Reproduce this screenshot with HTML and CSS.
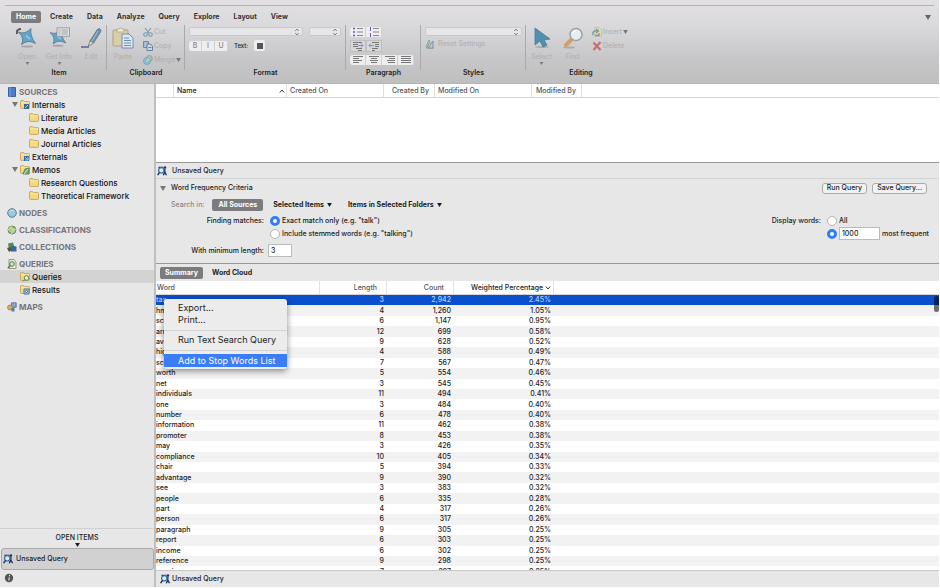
FILE: index.html
```html
<!DOCTYPE html>
<html lang="en">
<head>
<meta charset="utf-8">
<title>Unsaved Query</title>
<link rel="stylesheet" href="styles.css">
</head>
<body>
<svg class="defs" aria-hidden="true">
  <symbol id="folder" viewBox="0 0 10 9"><path d="M.5 2.2V1.4q0-.8.8-.8h2.4l.9 1h4.1q.8 0 .8.8v5.2q0 .8-.8.8H1.3q-.8 0-.8-.8z" fill="#f3d980" stroke="#bf9a50" stroke-width=".8"/><path d="M1 2.8h8" stroke="#fbecb0" stroke-width=".8"/></symbol>
  <symbol id="pin" viewBox="0 0 22 22"><ellipse cx="11" cy="19.500" rx="6" ry="1" fill="#a3a3a9"/><path d="M2.500 5Q9 8 15 1.500 13.500 8.500 19.500 16.500 12 12 5.500 17.500 9 11 2.500 5z" fill="#5fa6ca" stroke="#587994" stroke-width=".9" stroke-linejoin="round"/><path d="M10 8.500q2 2 4 3.500" stroke="#93cde4" stroke-width="1.500" fill="none"/></symbol>
  <symbol id="query" viewBox="0 0 10 10"><path d="M7.800 2.500V6L6.300 9.300M7.800 6l1.700 3.300M1.500 1.500h5" stroke="#292f68" stroke-width="1.400" fill="none"/><circle cx="8" cy="1.500" r="1.200" fill="#292f68"/><circle cx="4.300" cy="4.300" r="2.700" fill="#d8edf5" stroke="#33709c" stroke-width="1.200"/><path d="M2.500 6.300L.6 9.200" stroke="#292f68" stroke-width="1.500"/></symbol>
  <symbol id="tri" viewBox="0 0 6 5"><path d="M0 0h6L3 5z" fill="currentColor"/></symbol>
  <symbol id="updown" viewBox="0 0 6 8"><path d="M1.200 3L3 1l1.800 2M1.200 5L3 7l1.800-2" fill="none" stroke="#777" stroke-width=".9"/></symbol>
  <symbol id="globe" viewBox="0 0 10 10"><circle cx="5" cy="5" r="4.300" fill="#9fc6df" stroke="#587f99"/><path d="M2.500 4Q4 1.700 7 2.800" stroke="#d4e9f4" fill="none"/></symbol>
</svg>

<header class="ribbon">
  <nav class="menu">
    <button class="tab on">Home</button><button class="tab">Create</button><button class="tab">Data</button><button class="tab">Analyze</button><button class="tab">Query</button><button class="tab">Explore</button><button class="tab">Layout</button><button class="tab">View</button>
    <button class="collapse" aria-label="Collapse ribbon"><svg width="6" height="5"><use href="#tri"/></svg></button>
  </nav>
  <div class="groups">
    <section class="group item">
      <div class="tools">
        <button class="big"><svg width="22" height="22" viewBox="0 0 22 22"><use href="#pin" width="22" height="22"/><path d="M1 7q-1-5 4-5" stroke="#555" stroke-width="2" fill="none"/></svg><span>Open</span><svg class="drop" width="5" height="3"><use href="#tri"/></svg></button>
        <button class="big"><svg width="22" height="22" viewBox="0 0 22 22"><use href="#pin" width="20" height="22"/><path d="M9 .8h12.500v8.500H9z" fill="#e4e4e4" stroke="#8d8f94" stroke-width=".8"/><path d="M10.500 3h2m1 0h6.500M10.500 5h2m1 0h6.500M10.500 7h2m1 0h6.500" stroke="#8d8f94" stroke-width=".8"/></svg><span>Get Info</span><svg class="drop" width="5" height="3"><use href="#tri"/></svg></button>
        <button class="big"><svg width="22" height="22" viewBox="0 0 22 22"><path d="M1 20h8" stroke="#525b84" stroke-width="1.400"/><path d="M8.500 19l1.500-5 7-11q1.500-2 3-1 1.500 1 .5 3l-7 11z" fill="#6798ad" stroke="#596a7d" stroke-width=".8"/><path d="M8.500 19l1.500-5 3.500 2z" fill="#e9d9c4" stroke="#777" stroke-width=".5"/><path d="M12 14l6-10" stroke="#9bc3d2"/></svg><span>Edit</span></button>
      </div>
      <h2>Item</h2>
    </section>
    <section class="group clipboard">
      <div class="tools">
        <button class="big"><svg width="22" height="22" viewBox="0 0 22 22"><rect x="1" y="3" width="15" height="16" rx="1" fill="#d9ceab" stroke="#b2a27b"/><path d="M5 5V2h2q1-2 3 0h2v3z" fill="#eee8d5" stroke="#aaa17d" stroke-width=".7"/><path d="M10 7h7l4 4v10H10z" fill="#dce8f2" stroke="#6a86a6" stroke-width=".9"/><path d="M12 11h5M12 13.500h7M12 16h7M12 18.500h7" stroke="#6a8fb8"/></svg><span>Paste</span></button>
        <div class="stack">
          <button class="small"><svg width="10" height="10" viewBox="0 0 10 10"><path d="M2 1l4 5M8 1L4 6" stroke="#8c98a1" stroke-width="1.200"/><circle cx="2.500" cy="7.500" r="1.800" fill="none" stroke="#6f9fba" stroke-width="1.100"/><circle cx="7.500" cy="7.500" r="1.800" fill="none" stroke="#6f9fba" stroke-width="1.100"/></svg>Cut</button>
          <button class="small"><svg width="10" height="10" viewBox="0 0 10 10"><path d="M.5.5h5v6h-5z" fill="#a9bfd5" stroke="#6b8bad"/><path d="M4 3h3l2.500 2v4.500H4z" fill="#c9d9e8" stroke="#6181a6"/><path d="M5.500 6.500h3" stroke="#6181a6"/></svg>Copy</button>
          <button class="small"><svg width="10" height="10" viewBox="0 0 10 10"><circle cx="6.300" cy="3.500" r="3" fill="#acc3b3" stroke="#7b9b88" stroke-width=".7"/><circle cx="4" cy="6" r="3.500" fill="#8fbcd0" stroke="#6799b3" stroke-width=".7"/><path d="M3 7l3-3M4 4h2v2" stroke="#cfd89b" fill="none"/></svg>Merge<svg class="drop" width="5" height="4"><use href="#tri"/></svg></button>
        </div>
      </div>
      <h2>Clipboard</h2>
    </section>
    <section class="group format">
      <div class="tools col">
        <div class="line"><div class="picker font"><select aria-label="Font" disabled></select><svg width="6" height="8"><use href="#updown"/></svg></div><div class="picker size"><select aria-label="Size" disabled></select><svg width="6" height="8"><use href="#updown"/></svg></div></div>
        <div class="line"><div class="seg letters"><button>B</button><button>I</button><button>U</button></div><label class="textlabel" for="textcolor">Text:</label><button class="swatch" id="textcolor" aria-label="Text colour"><i></i></button></div>
      </div>
      <h2>Format</h2>
    </section>
    <section class="group paragraph">
      <div class="tools col">
        <div class="seg"><button aria-label="Bullets"><svg width="12" height="10" viewBox="0 0 12 10"><path d="M1 1.500h2M1 5h2M1 8.500h2" stroke="#6a54c8" stroke-width="1.500"/><path d="M5 1.500h6M5 5h6M5 8.500h6" stroke="#888"/></svg></button><button aria-label="Numbers"><svg width="12" height="10" viewBox="0 0 12 10"><path d="M2.500 0v4M2.500 6v4" stroke="#6a54c8"/><path d="M5 1.500h6M5 5h6M5 8.500h6" stroke="#888"/></svg></button></div>
        <div class="seg square"><button aria-label="Indent"><svg width="12" height="10" viewBox="0 0 12 10"><path d="M1 1.500h9M1 3.500h5M1 5.500h5M4 7.500h6M6 9.500h4" stroke="#777"/><path d="M6 4.500h5M9 2.500l2 2-2 2" stroke="#6e9bd0" fill="none"/></svg></button><button aria-label="Outdent"><svg width="12" height="10" viewBox="0 0 12 10"><path d="M4 1.500h7M7 3.500h4M7 5.500h4M4 7.500h6M4 9.500h3" stroke="#777"/><path d="M1 4.500h5M3 2.500l-2 2 2 2" stroke="#6e9bd0" fill="none"/></svg></button></div>
        <div class="seg"><button aria-label="Align left"><svg width="10" height="8" viewBox="0 0 10 8"><path d="M0 .5h10M0 2.500h6M0 4.500h9M0 6.500h6" stroke="#777"/></svg></button><button aria-label="Centre"><svg width="10" height="8" viewBox="0 0 10 8"><path d="M0 .5h10M2 2.500h6M1 4.500h8M2 6.500h6" stroke="#777"/></svg></button><button aria-label="Align right"><svg width="10" height="8" viewBox="0 0 10 8"><path d="M0 .5h10M4 2.500h6M2 4.500h8M3 6.500h7" stroke="#777"/></svg></button><button aria-label="Justify"><svg width="10" height="8" viewBox="0 0 10 8"><path d="M0 .5h10M0 2.500h10M0 4.500h10M0 6.500h10" stroke="#777"/></svg></button></div>
      </div>
      <h2>Paragraph</h2>
    </section>
    <section class="group styles">
      <div class="tools col">
        <div class="picker"><select aria-label="Style" disabled></select><svg width="6" height="8"><use href="#updown"/></svg></div>
        <button class="small reset"><svg width="10" height="10" viewBox="0 0 10 10"><path d="M1 8L4 1l1 1-3 7zM1 9h8" stroke="#8ba890" fill="#b4c8b4"/><path d="M3 9l5-7v7z" stroke="#7890ad" fill="#b9cad9"/></svg>Reset Settings</button>
      </div>
      <h2>Styles</h2>
    </section>
    <section class="group editing">
      <div class="tools">
        <button class="big"><svg width="22" height="22" viewBox="0 0 22 22"><ellipse cx="11" cy="20" rx="7" ry="1" fill="#acabb0"/><path d="M4 1l15 11-6 1 3 5-4 2-3-6-5 4z" fill="#528fae" stroke="#4d7995" stroke-width=".8"/></svg><span>Select</span><svg class="drop" width="5" height="3"><use href="#tri"/></svg></button>
        <button class="big"><svg width="22" height="22" viewBox="0 0 22 22"><ellipse cx="7" cy="20.500" rx="6" ry="1" fill="#acabb0"/><path d="M4 18l6-6" stroke="#d0a268" stroke-width="4" stroke-linecap="round"/><circle cx="14" cy="7.500" r="6" fill="#e7eef1" stroke="#9da1a8" stroke-width="1.500"/><path d="M10 7q1-3 4-3" stroke="#fff" fill="none"/></svg><span>Find</span></button>
        <div class="stack">
          <button class="small"><svg width="10" height="10" viewBox="0 0 10 10"><path d="M2.500.5H7L9.500 3v6h-7z" fill="#ecd9a9" stroke="#d5b885" stroke-width=".8"/><path d="M1 8Q0 3 6 4M4 2l2.500 2L4 6M3 8.500h4V6" stroke="#5f9dbc" stroke-width="1.300" fill="none"/></svg>Insert<svg class="drop" width="5" height="4"><use href="#tri"/></svg></button>
          <button class="small"><svg width="10" height="10" viewBox="0 0 10 10"><path d="M1.500 1.500l7 7.500M8.500 1L1.500 9" stroke="#d1676b" stroke-width="2"/></svg>Delete</button>
        </div>
      </div>
      <h2>Editing</h2>
    </section>
  </div>
</header>

<div class="body">
  <aside class="sidebar">
    <nav class="tree">
      <section><h3><svg width="10" height="10" viewBox="0 0 10 10"><path d="M1.500.5h7v9h-7z" fill="#4f7dcd" stroke="#3a5fa8"/><path d="M3 0v10" stroke="#7da0dd"/></svg>SOURCES</h3>
        <ul>
          <li><svg class="open" width="6" height="5"><use href="#tri"/></svg><svg width="10" height="10" viewBox="0 0 10 10"><use href="#folder" width="10" height="9"/><path d="M4 4h5v5H4z" fill="#3268a6"/><path d="M5 8l3-3" stroke="#c0da82"/></svg><a href="#">Internals</a></li>
          <li class="deep"><svg width="10" height="9"><use href="#folder"/></svg><a href="#">Literature</a></li>
          <li class="deep"><svg width="10" height="9"><use href="#folder"/></svg><a href="#">Media Articles</a></li>
          <li class="deep"><svg width="10" height="9"><use href="#folder"/></svg><a href="#">Journal Articles</a></li>
          <li><i class="open"></i><svg width="10" height="10" viewBox="0 0 10 10"><use href="#folder" width="10" height="9"/><path d="M4 4h5v5H4z" fill="#3268a6"/><path d="M5 5l3 3M8 5v3H5" stroke="#a8c5e5" fill="none"/></svg><a href="#">Externals</a></li>
          <li><svg class="open" width="6" height="5"><use href="#tri"/></svg><svg width="10" height="10" viewBox="0 0 10 10"><use href="#folder" width="10" height="9"/><path d="M3 9l2-5 4-1v6z" fill="#75a878" stroke="#43785a" stroke-width=".8"/><path d="M4 9l4-5" stroke="#d9e8c8"/></svg><a href="#">Memos</a></li>
          <li class="deep"><svg width="10" height="9"><use href="#folder"/></svg><a href="#">Research Questions</a></li>
          <li class="deep"><svg width="10" height="9"><use href="#folder"/></svg><a href="#">Theoretical Framework</a></li>
        </ul></section>
      <section><h3><svg width="10" height="10"><use href="#globe"/></svg>NODES</h3></section>
      <section><h3><svg width="10" height="10" viewBox="0 0 10 10"><circle cx="5" cy="5" r="4" fill="#a1cfa2" stroke="#599766"/><path d="M1 5l3-3 2 3 3-1M4 9l2-4" stroke="#edce64" stroke-width="1.300" fill="none"/><path d="M2 7l2 1M6 2l2 1" stroke="#4e95bd"/></svg>CLASSIFICATIONS</h3></section>
      <section><h3><svg width="10" height="10" viewBox="0 0 10 10"><path d="M1 1.500L6 .5l1.500 5L2 7z" fill="#548d56"/><path d="M4 3.500l5.500 1V9.500H4z" fill="#3567a3"/><path d="M0 6l3-1 2 3-3 2z" fill="#604c40"/></svg>COLLECTIONS</h3></section>
      <section><h3><svg width="10" height="10" viewBox="0 0 10 10"><path d="M2 .5h5L9 3v6.500H2z" fill="#efe9cd" stroke="#858560" stroke-width=".8"/><circle cx="5" cy="5" r="2.300" fill="#d2e4d8" stroke="#527b5b"/><path d="M3.500 6.500L.8 9.300" stroke="#527b5b" stroke-width="1.300"/></svg>QUERIES</h3>
        <ul>
          <li class="selected"><i class="open"></i><svg width="10" height="10" viewBox="0 0 10 10"><use href="#folder" width="10" height="9"/><circle cx="6.500" cy="6" r="2.300" fill="#e2f0df" stroke="#528055" stroke-width=".9"/><path d="M5 7.500L3 9.500" stroke="#528055"/></svg><a href="#">Queries</a></li>
          <li><i class="open"></i><svg width="10" height="10" viewBox="0 0 10 10"><use href="#folder" width="10" height="9"/><path d="M4 4h5v5H4z" fill="#bdd8ea" stroke="#416e9c"/><circle cx="6.500" cy="6.500" r="1" fill="#fff" stroke="#305c87"/></svg><a href="#">Results</a></li>
        </ul></section>
      <section><h3><svg width="10" height="10" viewBox="0 0 10 10"><path d="M4.500.8h4.700v4.500H4.500z" fill="#86a9d0" stroke="#4a6794" stroke-width=".8"/><circle cx="3" cy="5.500" r="2.500" fill="#e1a759" stroke="#a56f36" stroke-width=".7"/><path d="M4.500 6h3v3.500h-3z" fill="#507cb0"/></svg>MAPS</h3></section>
    </nav>
    <div class="openitems">
      <h4>OPEN ITEMS<svg width="5" height="4"><use href="#tri"/></svg></h4>
      <button class="openitem"><svg width="10" height="10"><use href="#query"/></svg>Unsaved Query</button>
      <button class="info" aria-label="Information"><svg width="10" height="10" viewBox="0 0 10 10"><circle cx="5" cy="5" r="4.200" fill="#555"/><path d="M5.300 4.300L4.800 7.500M5.500 2v1.200" stroke="#e7e7e7" stroke-width="1.100"/></svg></button>
    </div>
  </aside>

  <main class="main">
    <div class="list">
      <table class="files">
        <colgroup><col class="f0"><col class="f1"><col class="f2"><col class="f3"><col class="f4"><col class="f5"><col></colgroup>
        <thead><tr><th></th><th class="strong"><span class="sort">Name<svg width="6" height="4" viewBox="0 0 6 4"><path d="M.8 3.500L3 1l2.200 2.500" fill="none" stroke="#333"/></svg></span></th><th>Created On</th><th class="r">Created By</th><th>Modified On</th><th class="r">Modified By</th><th class="rest"></th></tr></thead>
      </table>
    </div>
    <div class="title"><svg width="10" height="10"><use href="#query"/></svg>Unsaved Query</div>
    <form class="criteria">
      <div class="heading"><svg width="6" height="5"><use href="#tri"/></svg><strong>Word Frequency Criteria</strong><button type="button" class="push">Run Query</button><button type="button" class="push">Save Query...</button></div>
      <div class="search"><span class="muted">Search in:</span><button type="button" class="pill on">All Sources</button><button type="button" class="pill">Selected Items<svg width="5" height="4"><use href="#tri"/></svg></button><button type="button" class="pill">Items in Selected Folders<svg width="5" height="4"><use href="#tri"/></svg></button></div>
      <div class="options">
        <div class="matches">
          <span class="lab">Finding matches:</span><label><input type="radio" name="match" checked>Exact match only (e.g. "talk")</label>
          <label class="second"><input type="radio" name="match">Include stemmed words (e.g. "talking")</label>
        </div>
        <div class="display">
          <span class="lab">Display words:</span><label><input type="radio" name="show">All</label>
          <div class="second most"><input type="radio" name="show" id="most" aria-label="Most frequent" checked><input type="text" class="field count" id="count" value="1000"><label for="count">most frequent</label></div>
        </div>
      </div>
      <div class="minimum"><label class="lab" for="min">With minimum length:</label><input type="text" class="field" id="min" value="3"></div>
    </form>
    <div class="views"><button class="pill on">Summary</button><button class="pill">Word Cloud</button></div>
    <div class="results">
      <table class="words">
        <colgroup><col class="w0"><col class="w1"><col class="w1"><col class="w3"><col></colgroup>
        <thead><tr><th class="l">Word</th><th>Length</th><th>Count</th><th class="sorted">Weighted Percentage <svg width="6" height="4" viewBox="0 0 6 4"><path d="M.8.5L3 3 5.200.5" fill="none" stroke="#333"/></svg></th><th class="rest"></th></tr></thead>
        <tbody>
          <tr class="selected"><td>tax</td><td>3</td><td>2,942</td><td>2.45%</td><td></td></tr>
          <tr><td>hmrc</td><td>4</td><td>1,260</td><td>1.05%</td><td></td></tr>
          <tr><td>scheme</td><td>6</td><td>1,147</td><td>0.95%</td><td></td></tr>
          <tr><td>arrangements</td><td>12</td><td>699</td><td>0.58%</td><td></td></tr>
          <tr><td>avoidance</td><td>9</td><td>628</td><td>0.52%</td><td></td></tr>
          <tr><td>high</td><td>4</td><td>588</td><td>0.49%</td><td></td></tr>
          <tr><td>schemes</td><td>7</td><td>567</td><td>0.47%</td><td></td></tr>
          <tr><td>worth</td><td>5</td><td>554</td><td>0.46%</td><td></td></tr>
          <tr><td>net</td><td>3</td><td>545</td><td>0.45%</td><td></td></tr>
          <tr><td>individuals</td><td>11</td><td>494</td><td>0.41%</td><td></td></tr>
          <tr><td>one</td><td>3</td><td>484</td><td>0.40%</td><td></td></tr>
          <tr><td>number</td><td>6</td><td>478</td><td>0.40%</td><td></td></tr>
          <tr><td>information</td><td>11</td><td>462</td><td>0.38%</td><td></td></tr>
          <tr><td>promoter</td><td>8</td><td>453</td><td>0.38%</td><td></td></tr>
          <tr><td>may</td><td>3</td><td>426</td><td>0.35%</td><td></td></tr>
          <tr><td>compliance</td><td>10</td><td>405</td><td>0.34%</td><td></td></tr>
          <tr><td>chair</td><td>5</td><td>394</td><td>0.33%</td><td></td></tr>
          <tr><td>advantage</td><td>9</td><td>390</td><td>0.32%</td><td></td></tr>
          <tr><td>see</td><td>3</td><td>383</td><td>0.32%</td><td></td></tr>
          <tr><td>people</td><td>6</td><td>335</td><td>0.28%</td><td></td></tr>
          <tr><td>part</td><td>4</td><td>317</td><td>0.26%</td><td></td></tr>
          <tr><td>person</td><td>6</td><td>317</td><td>0.26%</td><td></td></tr>
          <tr><td>paragraph</td><td>9</td><td>305</td><td>0.25%</td><td></td></tr>
          <tr><td>report</td><td>6</td><td>303</td><td>0.25%</td><td></td></tr>
          <tr><td>income</td><td>6</td><td>302</td><td>0.25%</td><td></td></tr>
          <tr><td>reference</td><td>9</td><td>298</td><td>0.25%</td><td></td></tr>
          <tr><td>evasion</td><td>7</td><td>297</td><td>0.25%</td><td></td></tr>
        </tbody>
      </table>
      <i class="thumb"></i>
      <div class="context" role="menu">
        <button role="menuitem">Export...</button><button role="menuitem">Print...</button><hr><button role="menuitem">Run Text Search Query</button><hr><button role="menuitem" class="hot">Add to Stop Words List</button>
      </div>
    </div>
    <footer class="title foot"><svg width="10" height="10"><use href="#query"/></svg>Unsaved Query</footer>
  </main>
</div>
</body>
</html>
```
FILE: styles.css
```css
* { box-sizing: border-box; }
html, body { height: 100%; }
body {
  margin: 0;
  padding: 0 1px 1px 0;
  display: flex;
  flex-direction: column;
  overflow: hidden;
  background: #fff;
  color: #1c1c1c;
  font: 500 7px/10px Inter, "Liberation Sans", sans-serif;
}
.defs { position: absolute; width: 0; height: 0; }
svg { display: block; flex: none; }
h2, h3, h4, ul { margin: 0; padding: 0; font-size: inherit; list-style: none; }
button { margin: 0; padding: 0; border: 0; background: none; font: inherit; color: inherit; white-space: nowrap; }
a { color: inherit; text-decoration: none; }

/* Ribbon */
.ribbon {
  flex: none;
  height: 84px;
  padding-top: 5px;
  background: linear-gradient(#e2e0e3, #dad9dc 30%, #c7c6c9 70%, #bfbfbf);
  border-bottom: 1px solid #b5b5b7;
}
.menu {
  display: flex;
  align-items: center;
  margin: 0 5px;
  padding: 5px 0 0 6px;
  border-top: 1px solid #b3b2b5;
  font-weight: 700;
  color: #333;
}
.tab { height: 12px; margin-right: 4px; padding: 0 5px; border-radius: 2px; }
.tab.on, .pill.on { background: #7c7b7d; color: #fff; }
.collapse { margin-left: auto; padding-right: 3px; color: #666; }
.groups { display: flex; margin: 2px 0 0 11px; }
.group h2 { text-align: center; line-height: 10px; font-size: 7px; font-weight: 600; margin-top: -2px; color: #222; }
.tools { display: flex; height: 45px; padding-top: 2px; border-right: 1px solid #aaa9ac; }
.tools.col { flex-direction: column; align-items: flex-start; gap: 3px; padding-left: 4px; }
.item { width: 96px; }
.clipboard { width: 78px; }
.format { width: 161px; }
.paragraph { width: 75px; }
.styles { width: 105px; }
.editing { width: 110px; }
.editing .tools { border: 0; }
.big { display: flex; flex: none; flex-direction: column; align-items: center; width: 32px; color: #b0afb0; font-weight: 400; }
.big span { margin-top: 3px; }
.editing .big { width: 31px; }
.drop { color: #77777b; }
.stack { display: flex; flex-direction: column; gap: 4px; padding-left: 4px; }
.small { display: flex; align-items: center; gap: 1px; height: 10px; color: #aeadaf; font-weight: 400; }
.small.reset { gap: 3px; }
.line { display: flex; align-items: center; gap: 6px; }
.picker { display: flex; align-items: center; justify-content: flex-end; height: 9px; width: 97px; padding-right: 2px; border: 1px solid #c9c8cb; border-radius: 2px; background: #e6e5e7; }
.picker select { appearance: none; flex: 1; min-width: 0; height: 7px; padding: 0; border: 0; background: none; }
.picker.font { width: 114px; }
.picker.size { width: 32px; }
.seg { display: flex; border-radius: 3px; background: #eee; overflow: hidden; }
.seg button { display: grid; place-items: center; width: 16px; height: 10px; border-right: 1px solid #d0d0d0; }
.seg.letters button { width: 13px; color: #888; }
.seg.square { border-radius: 0; background: #d8d7d9; }
.seg.square button { border: 1px solid #c0bfc2; height: 12px; }
.format .tools { gap: 4px; }
.textlabel { font-size: 6px; }
.swatch { display: grid; place-items: center; width: 11px; height: 11px; border-radius: 2px; background: #eee; }
.swatch i { width: 6px; height: 6px; background: #555; }

/* Body */
.body { display: grid; grid-template-columns: 156px minmax(0, 1fr); flex: 1; min-height: 0; }
.sidebar { display: flex; flex-direction: column; background: #e7e7e7; border-right: 2px solid #bfbfbf; min-height: 0; }
.tree { display: flex; flex-direction: column; gap: 5px; flex: 1; padding-top: 2px; font-size: 8px; }
.tree h3 { display: flex; align-items: center; gap: 2px; height: 12px; padding-left: 7px; font-weight: 700; color: #77757c; }
.tree li { display: flex; align-items: center; gap: 2px; height: 13px; padding-left: 12px; color: #111; }
.tree li.deep { padding-left: 29px; }
.open { width: 6px; color: #777; }
.tree li.selected { background: #d3d3d3; }
.openitems { border-top: 1px solid #d0d0d0; }
.openitems h4 { display: flex; flex-direction: column; align-items: center; height: 19px; padding-top: 4px; font-weight: 500; }
.openitem { display: flex; align-items: center; gap: 3px; width: calc(100% - 1px); height: 22px; padding-left: 1px; margin-left: 1px; border: 1px solid #a9a9a9; border-radius: 3px; background: #d1d1d1; }
.info { display: block; padding: 3px 4px 4px; }

.main { display: flex; flex-direction: column; min-width: 0; min-height: 0; background: #e7e7e7; }
table { border-collapse: separate; border-spacing: 0; table-layout: fixed; width: 100%; }
th { padding: 0 3px; text-align: left; font-weight: 500; color: #555; white-space: nowrap; border-right: 1px solid #e0e0e0; border-bottom: 1px solid #d5d5d5; }
th.rest { border-right: 0; }
.list { flex: none; height: 78px; background: #fff; }
.files th { height: 14px; }
.f0 { width: 18px; } .f1 { width: 113px; } .f2 { width: 97px; } .f3 { width: 51px; } .f4 { width: 97px; } .f5 { width: 50px; }
.files .strong { color: #222; padding-right: 1px; }
.files .r { padding-right: 5px; text-align: right; }
.sort { display: flex; align-items: center; justify-content: space-between; }
.title { display: flex; flex: none; align-items: center; gap: 5px; height: 17px; padding-left: 1px; border-top: 1px solid #999; border-bottom: 1px solid #d3d3d3; }
.criteria { display: flex; flex-direction: column; flex: none; height: 84px; padding: 3px 0 0 4px; }
.heading { display: flex; align-items: center; gap: 5px; height: 12px; padding-right: 12px; }
.heading svg { color: #777; }
.heading strong { flex: 1; font-weight: 500; }
.push { height: 11px; padding: 0 4px; border: 1px solid #aaa; border-radius: 3px; background: #f2f2f2; line-height: 8px; }
.search { display: flex; align-items: center; height: 12px; margin-top: 5px; padding-left: 11px; }
.muted { color: #888; margin-right: 8px; }
.pill { display: flex; align-items: center; gap: 3px; height: 12px; padding: 0 5px; margin-right: 4px; border-radius: 2px; font-weight: 700; }
.search .pill { padding: 0 6px; }
.options { display: flex; justify-content: space-between; margin-top: 3px; padding-right: 10px; }
.matches, .display { display: grid; grid-template-columns: 104px auto; grid-auto-rows: 13px; align-items: center; column-gap: 6px; }
.display { grid-template-columns: auto auto; }
.second { grid-column: 2; }
.lab { text-align: right; }
.criteria label, .most { display: flex; align-items: center; gap: 2px; }
input[type="radio"] { appearance: none; flex: none; width: 10px; height: 10px; margin: 0; border: 1px solid #b5b5b5; border-radius: 50%; background: #fff; }
input[type="radio"]:checked { border: 3px solid #2f7ff5; }
.field { width: 24px; height: 13px; margin: 0; padding: 0 2px; border: 1px solid #bbb; background: #fff; font: inherit; color: inherit; }
.field.count { width: 41px; }
.minimum { display: flex; align-items: center; gap: 4px; margin-top: 4px; }
.minimum .lab { width: 104px; justify-content: flex-end; }
.views { display: flex; flex: none; align-items: center; height: 18px; padding-left: 4px; border-top: 1px solid #999; }

.results { position: relative; flex: 1; min-height: 0; background: #fff; overflow: hidden; }
.words { height: calc(100% + 7px); }
.w0 { width: 164px; } .w1 { width: 67px; } .w3 { width: 100px; }
.words th { height: 14px; padding-right: 9px; text-align: right; }
.words th.l { padding-left: 1px; text-align: left; }
.words th.sorted { padding-right: 2px; color: #222; }
.sorted svg { display: inline-block; }
.words td { padding: 0 3px; text-align: right; line-height: 10px; }
.words td:first-child { padding-left: 0; text-align: left; }
.words tbody tr:nth-child(even) { background: #f2f2f2; }
.words tbody tr.selected { background: #0a4fcd; color: #b9d2fb; }
.thumb { position: absolute; right: 0; top: 15px; width: 5px; height: 16px; border-radius: 3px; background: rgba(0, 0, 0, .55); }
.context { position: absolute; left: 8px; top: 18px; width: 123px; padding: 3px 0 2px; border-radius: 3px; background: #ececec; box-shadow: 0 2px 6px rgba(0, 0, 0, .45); font-size: 9px; }
.context button { display: block; width: 100%; height: 12px; padding-left: 14px; text-align: left; font-weight: 400; }
.context .hot { height: 13px; background: #3b7df7; color: #fff; }
.context hr { height: 1px; margin: 4px 0 3px; border: 0; background: #d3d3d3; }
.foot { height: 17px; padding-left: 4px; border-top-color: #c8c8c8; border-bottom: 0; gap: 2px; }
```
